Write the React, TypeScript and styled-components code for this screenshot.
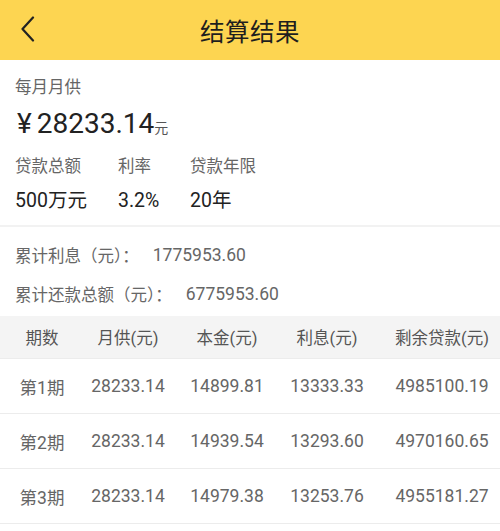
import React from 'react';
import styled, { createGlobalStyle } from 'styled-components';

const GlobalStyle = createGlobalStyle`
  html, body {
    margin: 0;
    padding: 0;
    background: #fff;
    overflow: hidden;
  }
  body {
    font-family: Roboto, "Noto Sans CJK SC", sans-serif;
    color: #222;
  }
`;

const Page = styled.div`
  width: 500px;
  overflow: hidden;
`;

const Header = styled.header`
  height: 60px;
  background-color: #fdd551;
  display: flex;
  align-items: center;
  justify-content: center;
  position: relative;
`;

const BackButton = styled.button`
  position: absolute;
  left: 14px;
  top: 14px;
  width: 28px;
  height: 30px;
  padding: 0;
  border: none;
  background: none;
  display: flex;
  align-items: center;
  justify-content: center;
`;

const Title = styled.h1`
  margin: 0;
  font-size: 24.5px;
  font-weight: 400;
  color: #1e1e1e;
  letter-spacing: 0.5px;
`;

const Summary = styled.section`
  padding: 16px 15px 10px;
  border-bottom: 2px solid #f2f2f2;
`;

const Caption = styled.div`
  font-size: 16.5px;
  line-height: 24px;
  color: #666;
`;

const Amount = styled.div`
  margin: 6px 0 0 2px;
  font-size: 28px;
  line-height: 36px;
  color: #222;
`;

const Currency = styled.span`
  margin-right: 5px;
`;

const Unit = styled.span`
  font-size: 14px;
  color: #555;
`;

const Facts = styled.div`
  margin-top: 9px;
  display: grid;
  grid-template-columns: 103px 72px auto;
  row-gap: 8px;
`;

const FactLabel = styled.div`
  font-size: 16.5px;
  line-height: 24px;
  color: #666;
`;

const FactValue = styled.div`
  font-size: 19.5px;
  line-height: 28px;
  color: #222;
`;

const Totals = styled.section`
  padding: 8px 15px 3px;
`;

const TotalRow = styled.div`
  height: 39px;
  display: flex;
  align-items: center;
  font-size: 16.5px;
  color: #666;
`;

const TotalValue = styled.span`
  margin-left: 14px;
  font-size: 17.5px;
`;

const Table = styled.div`
  width: 512px;
`;

const Row = styled.div<{ $head?: boolean }>`
  display: grid;
  grid-template-columns: 84px 88px 110px 90px 140px;
  align-items: center;
  height: ${p => (p.$head ? '42px' : '54px')};
  background: ${p => (p.$head ? '#f4f4f4' : '#fff')};
  border-bottom: 1px solid #ececec;
  font-size: ${p => (p.$head ? '16.5px' : '17.5px')};
  color: ${p => (p.$head ? '#555' : '#666')};
`;

const Cell = styled.div`
  text-align: center;
  white-space: nowrap;
`;

const facts = [
  { label: '贷款总额', value: '500万元' },
  { label: '利率', value: '3.2%' },
  { label: '贷款年限', value: '20年' },
];

const columns = ['期数', '月供(元)', '本金(元)', '利息(元)', '剩余贷款(元)'];

const schedule = [
  ['第1期', '28233.14', '14899.81', '13333.33', '4985100.19'],
  ['第2期', '28233.14', '14939.54', '13293.60', '4970160.65'],
  ['第3期', '28233.14', '14979.38', '13253.76', '4955181.27'],
];

export default function App() {
  return (
    <Page>
      <GlobalStyle />
      <Header>
        <BackButton aria-label="返回">
          <svg width="16" height="26" viewBox="0 0 16 26" fill="none">
            <polyline points="13,1.5 2.5,13 13,24.5" stroke="#222" strokeWidth="2.2" strokeLinecap="round" strokeLinejoin="round" />
          </svg>
        </BackButton>
        <Title>结算结果</Title>
      </Header>

      <Summary>
        <Caption>每月月供</Caption>
        <Amount>
          <Currency>¥</Currency>28233.14<Unit>元</Unit>
        </Amount>
        <Facts>
          {facts.map(f => (
            <FactLabel key={f.label}>{f.label}</FactLabel>
          ))}
          {facts.map(f => (
            <FactValue key={f.label}>{f.value}</FactValue>
          ))}
        </Facts>
      </Summary>

      <Totals>
        <TotalRow>
          累计利息（元）：<TotalValue>1775953.60</TotalValue>
        </TotalRow>
        <TotalRow>
          累计还款总额（元）：<TotalValue>6775953.60</TotalValue>
        </TotalRow>
      </Totals>

      <Table>
        <Row $head>
          {columns.map(c => (
            <Cell key={c}>{c}</Cell>
          ))}
        </Row>
        {schedule.map(r => (
          <Row key={r[0]}>
            {r.map((v, i) => (
              <Cell key={i}>{v}</Cell>
            ))}
          </Row>
        ))}
      </Table>
    </Page>
  );
}
